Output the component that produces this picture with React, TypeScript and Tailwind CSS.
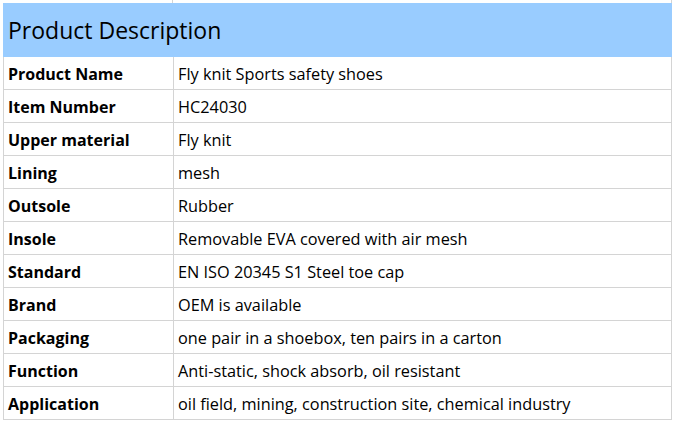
const rows: [string, string][] = [
  ['Product Name', 'Fly knit Sports safety shoes'],
  ['Item Number', 'HC24030'],
  ['Upper material', 'Fly knit'],
  ['Lining', 'mesh'],
  ['Outsole', 'Rubber'],
  ['Insole', 'Removable EVA covered with air mesh'],
  ['Standard', 'EN ISO 20345 S1 Steel toe cap'],
  ['Brand', 'OEM is available'],
  ['Packaging', 'one pair in a shoebox, ten pairs in a carton'],
  ['Function', 'Anti-static, shock absorb, oil resistant'],
  ['Application', 'oil field, mining, construction site, chemical industry'],
];

export default function App() {
  return (
    <div className="w-[675px] h-[423px] overflow-hidden bg-white text-black font-['Open_Sans','Liberation_Sans',sans-serif]">
      {/* spacer row above the header */}
      <div className="flex h-[3px] pl-[3px]">
        <div className="w-[170px] border-r border-[#d4d4d4]" />
        <div className="w-[499px] border-r border-[#d4d4d4]" />
      </div>

      {/* Header */}
      <div className="flex ml-[3px] w-[669px]">
        <div className="flex-1 h-[54px] bg-[#99ccff] flex items-center pl-[5px] pt-[1px] text-[23px] leading-none">
          Product Description
        </div>
      </div>

      {/* Rows */}
      {rows.map(([label, value]) => (
        <div key={label} className="flex h-[33px] ml-[3px] w-[669px] border-b border-l border-[#d4d4d4] leading-[20px]">
          <div className="w-[170px] border-r border-[#d4d4d4] flex items-center pl-[4px] pt-[1px] text-[16px] font-bold">
            {label}
          </div>
          <div className="flex-1 border-r border-[#d4d4d4] flex items-center pl-[4px] pt-[1px] text-[16.3px]">
            {value}
          </div>
        </div>
      ))}
    </div>
  );
}
